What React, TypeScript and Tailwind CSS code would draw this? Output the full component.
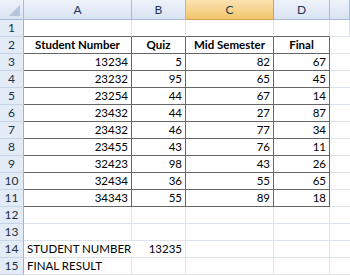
const rows: (string | number)[][] = [
  [13234, 5, 82, 67],
  [23232, 95, 65, 45],
  [23254, 44, 67, 14],
  [23432, 44, 27, 87],
  [23432, 46, 77, 34],
  [23455, 43, 76, 11],
  [32423, 98, 43, 26],
  [32434, 36, 55, 65],
  [34343, 55, 89, 18],
];

const cols = ['A', 'B', 'C', 'D'];

function ColHead({ label, active }: { label: string; active?: boolean }) {
  return (
    <div
      className={
        active
          ? 'flex items-center justify-center border-r border-b border-[#c9a457] bg-gradient-to-b from-[#fbe2b0] to-[#f3c56a] text-[12px] text-[#1f365a]'
          : 'flex items-center justify-center border-r border-b border-[#a9bcd4] bg-gradient-to-b from-[#eef3fa] to-[#d9e3f1] text-[12px] text-[#1f365a]'
      }
    >
      {label}
    </div>
  );
}

function RowHead({ n }: { n: number }) {
  return (
    <div className="flex items-center justify-center border-r border-b border-r-[#9eb3cf] border-b-[#c6d4e7] bg-[#e3ebf6] text-[12px] text-[#1f2f45]">
      {n}
    </div>
  );
}

export default function App() {
  return (
    <div
      className="grid h-[276px] w-[350px] grid-cols-[24px_108px_54px_88px_56px_1fr] grid-rows-[20px_repeat(15,17px)] overflow-hidden bg-white text-[11.5px] leading-none text-black"
      style={{ fontFamily: 'Lato, "Open Sans", sans-serif' }}
    >
      {/* corner */}
      <div className="relative border-r border-b border-[#a9bcd4] bg-gradient-to-b from-[#eef3fa] to-[#d9e3f1]">
        <svg className="absolute right-[3px] bottom-[3px]" width="11" height="11" viewBox="0 0 11 11">
          <polygon points="11,0 11,11 0,11" fill="#b4c5dc" />
        </svg>
      </div>
      {cols.map((c) => (
        <ColHead key={c} label={c} active={c === 'C'} />
      ))}
      <ColHead label="" />

      {/* row 1 */}
      <RowHead n={1} />
      <div className="border-r border-b border-r-[#dde3ea] border-b-[#666666]" />
      <div className="border-r border-b border-r-[#dde3ea] border-b-[#666666]" />
      <div className="border-r border-b border-r-[#dde3ea] border-b-[#666666]" />
      <div className="border-r border-b border-r-[#dde3ea] border-b-[#666666]" />
      <div className="border-r border-b border-[#dde3ea]" />

      {/* row 2 headers */}
      <RowHead n={2} />
      <div className="flex items-center justify-center border-r border-b border-[#666666] font-bold">Student Number</div>
      <div className="flex items-center justify-center border-r border-b border-[#666666] font-bold">Quiz</div>
      <div className="flex items-center justify-center border-r border-b border-[#666666] font-bold">Mid Semester</div>
      <div className="flex items-center justify-center border-r border-b border-[#666666] font-bold">Final</div>
      <div className="border-b border-[#dde3ea]" />

      {rows.map((r, i) => (
        <div key={i} className="contents">
          <RowHead n={i + 3} />
          {r.map((v, j) => (
            <div key={j} className="flex items-center justify-end border-r border-b border-[#666666] pr-[3px]">
              {v}
            </div>
          ))}
          <div className="border-b border-[#dde3ea]" />
        </div>
      ))}

      {/* rows 12, 13 */}
      {[12, 13].map((n) => (
        <div key={n} className="contents">
          <RowHead n={n} />
          <div className="border-r border-b border-[#dde3ea]" />
          <div className="border-r border-b border-[#dde3ea]" />
          <div className="border-r border-b border-[#dde3ea]" />
          <div className="border-r border-b border-[#dde3ea]" />
          <div className="border-b border-[#dde3ea]" />
        </div>
      ))}

      {/* row 14 */}
      <RowHead n={14} />
      <div className="flex items-center overflow-visible whitespace-nowrap border-b border-[#dde3ea] pl-[3px]">STUDENT NUMBER</div>
      <div className="flex items-center justify-end border-r border-b border-[#dde3ea] pr-[3px]">13235</div>
      <div className="border-r border-b border-[#dde3ea]" />
      <div className="border-r border-b border-[#dde3ea]" />
      <div className="border-b border-[#dde3ea]" />

      {/* row 15 */}
      <RowHead n={15} />
      <div className="flex items-center whitespace-nowrap border-r border-b border-[#dde3ea] pl-[3px]">FINAL RESULT</div>
      <div className="border-r border-b border-[#dde3ea]" />
      <div className="border-r border-b border-[#dde3ea]" />
      <div className="border-r border-b border-[#dde3ea]" />
      <div className="border-b border-[#dde3ea]" />
    </div>
  );
}
